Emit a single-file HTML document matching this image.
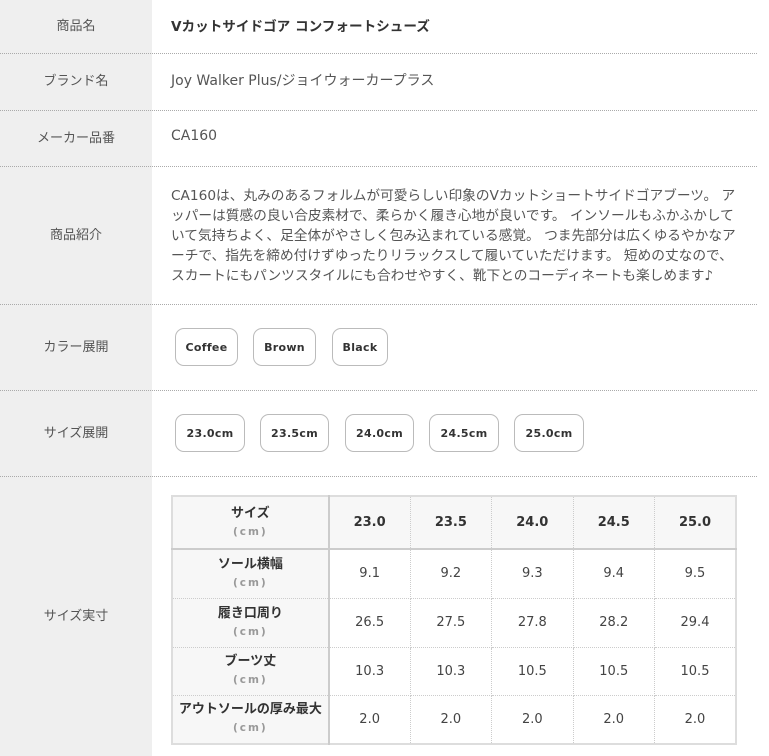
<!DOCTYPE html>
<html><head><meta charset="utf-8"><style>
*{margin:0;padding:0;box-sizing:border-box}
body{width:769px;height:756px;overflow:hidden;background:#fff;font-family:"DejaVu Sans","Noto Sans CJK JP",sans-serif;font-size:14px;color:#555;position:relative}
.lab{position:absolute;left:0;width:152px;background:#efefef;display:flex;align-items:center;justify-content:center;color:#555;font-size:13px;padding-bottom:4px}
.sep{position:absolute;left:0;width:757px;border-top:1px dotted #aaa;height:0}
.val{position:absolute;left:171px;display:flex;align-items:center;white-space:nowrap;padding-bottom:4px}
.btn{position:absolute;height:38px;border:1px solid #bbb;border-radius:9px;display:flex;align-items:center;justify-content:center;font-weight:bold;font-size:11px;color:#333;letter-spacing:.3px}
table{position:absolute;left:171px;top:495px;width:566px;height:250px;border-collapse:collapse;border:2px solid #ddd}
td{border:1px dotted #ccc;text-align:center;color:#444;font-size:13px;width:82px}
td.h{background:#f7f7f7;width:158px;font-weight:bold;color:#333;border-right:2px solid #ccc;font-size:13px;line-height:18px}
td.h span{display:block;color:#999;font-size:10.5px;letter-spacing:2px}
tr.top td{background:#f7f7f7;font-weight:bold;color:#333;border-bottom:2px solid #ccc;font-size:13px}
</style></head><body>
<div class="lab" style="top:0;height:53px">商品名</div>
<div class="lab" style="top:53px;height:57px">ブランド名</div>
<div class="lab" style="top:110px;height:56px">メーカー品番</div>
<div class="lab" style="top:166px;height:138px">商品紹介</div>
<div class="lab" style="top:304px;height:86px">カラー展開</div>
<div class="lab" style="top:390px;height:86px">サイズ展開</div>
<div class="lab" style="top:476px;height:280px">サイズ実寸</div>
<div class="sep" style="top:53px"></div>
<div class="sep" style="top:110px"></div>
<div class="sep" style="top:166px"></div>
<div class="sep" style="top:304px"></div>
<div class="sep" style="top:390px"></div>
<div class="sep" style="top:476px"></div>
<div class="val" style="top:0;height:53px;font-weight:bold;color:#333;font-size:13.6px">Vカットサイドゴア コンフォートシューズ</div>
<div class="val" style="top:53px;height:57px">Joy Walker Plus/ジョイウォーカープラス</div>
<div class="val" style="top:110px;height:56px">CA160</div>
<div style="position:absolute;left:171px;top:186px;width:600px;line-height:20px;white-space:nowrap;font-size:13.7px">CA160は、丸みのあるフォルムが可愛らしい印象のVカットショートサイドゴアブーツ。 ア<br>ッパーは質感の良い合皮素材で、柔らかく履き心地が良いです。 インソールもふかふかして<br>いて気持ちよく、足全体がやさしく包み込まれている感覚。 つま先部分は広くゆるやかなア<br>ーチで、指先を締め付けずゆったりリラックスして履いていただけます。 短めの丈なので、<br>スカートにもパンツスタイルにも合わせやすく、靴下とのコーディネートも楽しめます♪</div>
<div class="btn" style="left:175px;top:328px;width:63px">Coffee</div>
<div class="btn" style="left:253px;top:328px;width:63px">Brown</div>
<div class="btn" style="left:332px;top:328px;width:56px">Black</div>
<div class="btn" style="left:175px;top:414px;width:70px">23.0cm</div>
<div class="btn" style="left:260px;top:414px;width:69px">23.5cm</div>
<div class="btn" style="left:345px;top:414px;width:69px">24.0cm</div>
<div class="btn" style="left:429px;top:414px;width:70px">24.5cm</div>
<div class="btn" style="left:514px;top:414px;width:70px">25.0cm</div>
<table>
<tr class="top" style="height:53px"><td class="h">サイズ<span>(cm)</span></td><td>23.0</td><td>23.5</td><td>24.0</td><td>24.5</td><td>25.0</td></tr>
<tr style="height:49px"><td class="h">ソール横幅<span>(cm)</span></td><td>9.1</td><td>9.2</td><td>9.3</td><td>9.4</td><td>9.5</td></tr>
<tr style="height:49px"><td class="h">履き口周り<span>(cm)</span></td><td>26.5</td><td>27.5</td><td>27.8</td><td>28.2</td><td>29.4</td></tr>
<tr style="height:48px"><td class="h">ブーツ丈<span>(cm)</span></td><td>10.3</td><td>10.3</td><td>10.5</td><td>10.5</td><td>10.5</td></tr>
<tr style="height:49px"><td class="h">アウトソールの厚み最大<span>(cm)</span></td><td>2.0</td><td>2.0</td><td>2.0</td><td>2.0</td><td>2.0</td></tr>
</table>
</body></html>
